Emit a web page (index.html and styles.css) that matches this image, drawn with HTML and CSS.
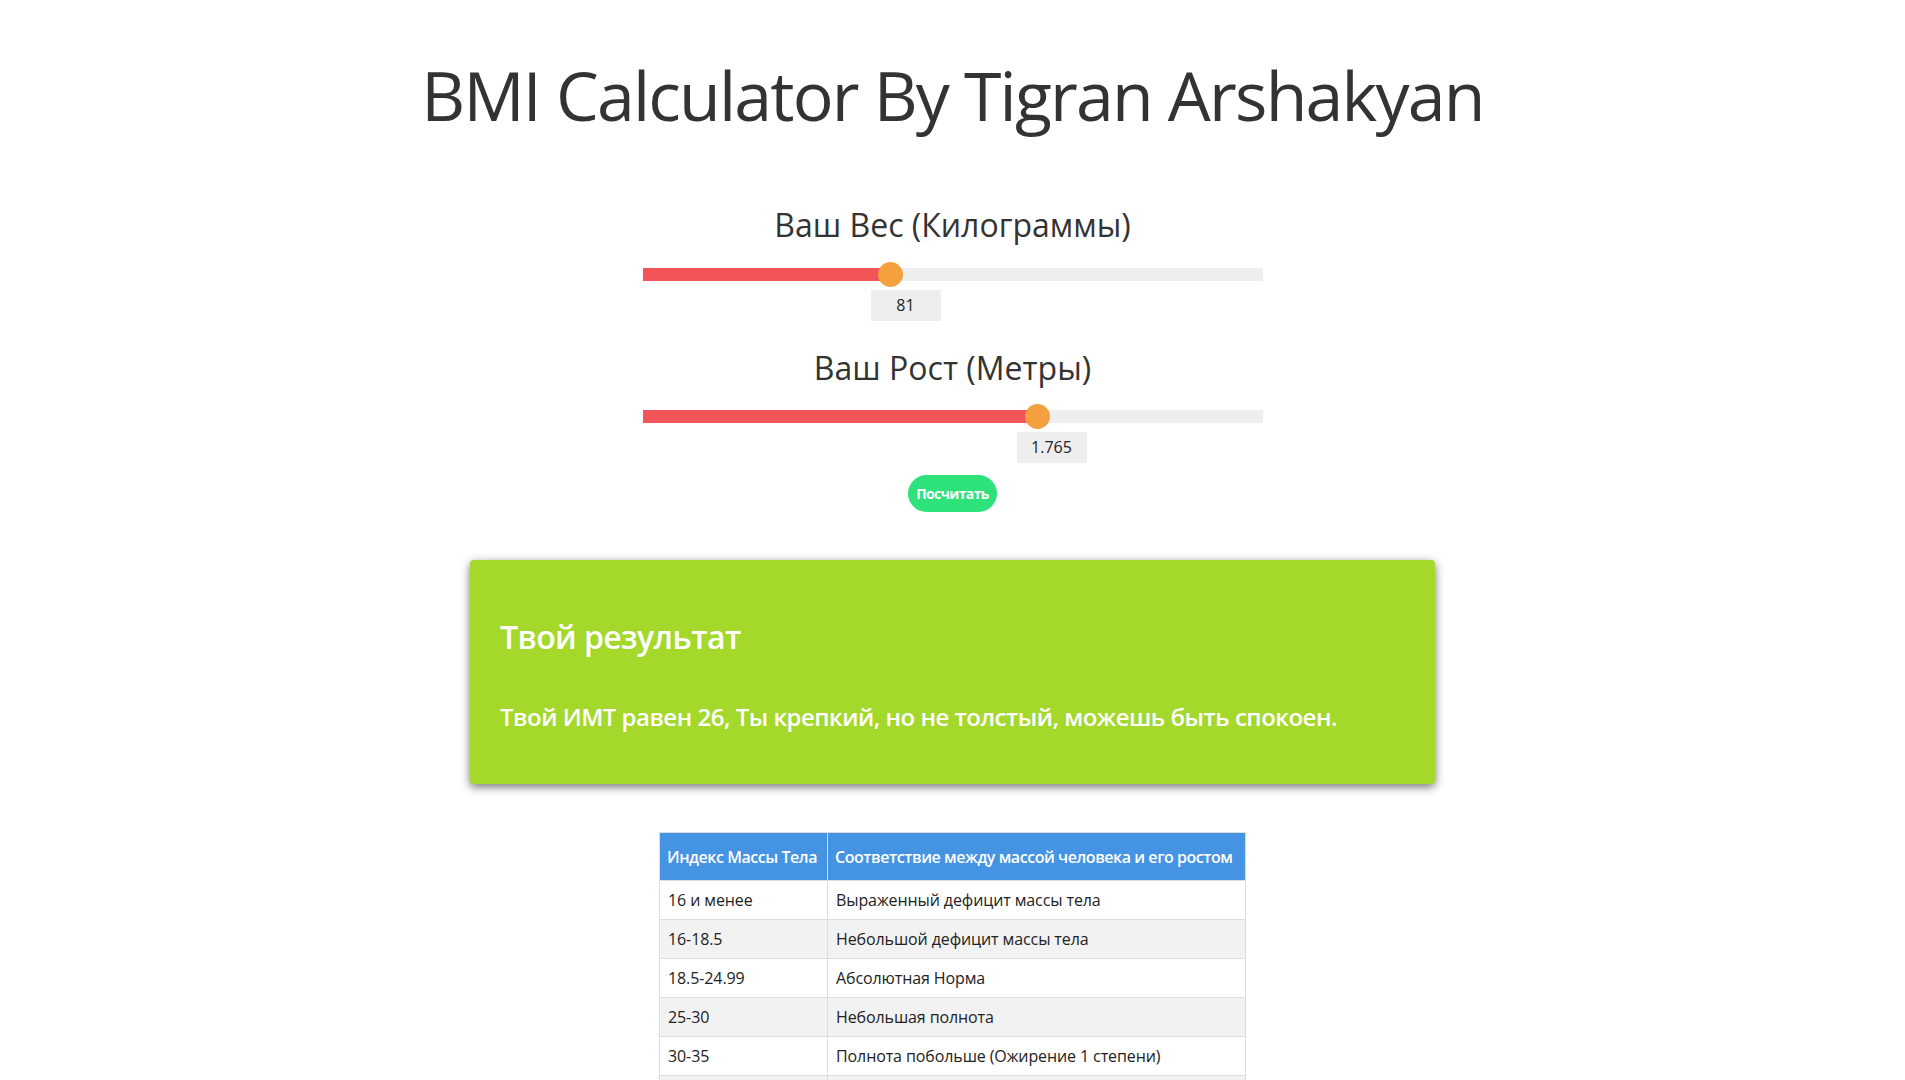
FILE: index.html
```html
<!DOCTYPE html>
<html lang="ru">
<head>
<meta charset="utf-8">
<title>BMI Calculator</title>
<link rel="stylesheet" href="styles.css">
</head>
<body>
<main class="page">
  <h1 class="title">BMI Calculator By Tigran Arshakyan</h1>

  <section class="field">
    <h2 class="field-label">Ваш Вес (Килограммы)</h2>
    <div class="slider">
      <div class="track">
        <div class="fill" style="width:247px"></div>
        <span class="thumb" style="left:235px"></span>
      </div>
      <div class="value-row"><output class="value" style="margin-left:228px">81</output></div>
    </div>
  </section>

  <section class="field field-second">
    <h2 class="field-label">Ваш Рост (Метры)</h2>
    <div class="slider">
      <div class="track">
        <div class="fill" style="width:394px"></div>
        <span class="thumb" style="left:382px"></span>
      </div>
      <div class="value-row"><output class="value" style="margin-left:374px">1.765</output></div>
    </div>
  </section>

  <div class="actions"><button class="btn">Посчитать</button></div>

  <section class="result">
    <h3 class="result-title">Твой результат</h3>
    <p class="result-text">Твой ИМТ равен 26, Ты крепкий, но не толстый, можешь быть спокоен.</p>
  </section>

  <table class="bmi-table">
    <thead>
      <tr><th class="col-index">Индекс Массы Тела</th><th>Соответствие между массой человека и его ростом</th></tr>
    </thead>
    <tbody>
      <tr><td>16 и менее</td><td>Выраженный дефицит массы тела</td></tr>
      <tr><td>16-18.5</td><td>Небольшой дефицит массы тела</td></tr>
      <tr><td>18.5-24.99</td><td>Абсолютная Норма</td></tr>
      <tr><td>25-30</td><td>Небольшая полнота</td></tr>
      <tr><td>30-35</td><td>Полнота побольше (Ожирение 1 степени)</td></tr>
      <tr><td>35-40</td><td>Ожирение 2 степени</td></tr>
      <tr><td>40 и более</td><td>Ожирение 3 степени</td></tr>
    </tbody>
  </table>
</main>
</body>
</html>
```

FILE: styles.css
```css
html, body {
  margin: 0;
  padding: 0;
  background: #ffffff;
}

body {
  font-family: "Open Sans", "Noto Sans", sans-serif;
  color: #333333;
}

.page {
  display: flex;
  flex-direction: column;
  align-items: center;
  padding-bottom: 60px;
}

.title {
  margin: 55px 0 0;
  font-size: 68px;
  line-height: 80px;
  font-weight: 400;
  color: #333333;
  letter-spacing: -1.8px;
}

.field {
  display: flex;
  flex-direction: column;
  align-items: center;
  margin-top: 70px;
}

.field-second {
  margin-top: 27px;
}

.field-label {
  margin: 0;
  font-size: 32px;
  line-height: 40px;
  font-weight: 400;
  color: #333333;
  letter-spacing: 0;
}

.slider {
  width: 620px;
  margin-top: 23px;
}

.field-second .slider {
  margin-top: 22px;
}

.track {
  position: relative;
  height: 13px;
  background: #eeeeee;
}

.fill {
  height: 100%;
  background: #f25457;
}

.thumb {
  position: absolute;
  top: -6px;
  width: 25px;
  height: 25px;
  border-radius: 50%;
  background: #f5a03f;
}

.value-row {
  display: flex;
  margin-top: 9px;
}

.value {
  display: block;
  width: 70px;
  height: 31px;
  line-height: 31px;
  text-align: center;
  background: #eeeeee;
  font-size: 16px;
  color: #222222;
}

.actions {
  margin-top: 12px;
}

.btn {
  display: block;
  width: 89px;
  height: 37px;
  border: none;
  border-radius: 19px;
  background: #2ee27b;
  color: #ffffff;
  font-family: "Open Sans", sans-serif;
  font-size: 14px;
  font-weight: 700;
  letter-spacing: -0.6px;
  padding: 0;
}

.result {
  box-sizing: border-box;
  width: 965px;
  margin-top: 48px;
  padding: 0 30px;
  height: 224px;
  background: #a4d82b;
  border-radius: 4px;
  box-shadow: 0 3px 10px rgba(0, 0, 0, 0.55);
  color: #ffffff;
  overflow: hidden;
}

.result-title {
  margin: 55px 0 0;
  font-size: 32px;
  line-height: 44px;
  font-weight: 600;
  letter-spacing: -0.6px;
}

.result-text {
  margin: 43px 0 0;
  font-size: 24px;
  line-height: 30px;
  font-weight: 600;
  letter-spacing: -0.5px;
}

.bmi-table {
  margin-top: 48px;
  width: 587px;
  border-collapse: collapse;
  font-size: 16px;
  color: #222222;
}

.bmi-table th {
  background: #4593e3;
  color: #ffffff;
  font-weight: 600;
  text-align: left;
  height: 47px;
  padding: 0 7px;
  border: 1px solid #dddddd;
  letter-spacing: -0.45px;
  white-space: nowrap;
}

.bmi-table .col-index {
  width: 153px;
}

.bmi-table td {
  height: 38px;
  padding: 0 8px;
  border: 1px solid #dddddd;
  letter-spacing: -0.1px;
}

.bmi-table tbody tr:nth-child(even) td {
  background: #f2f2f2;
}
```
